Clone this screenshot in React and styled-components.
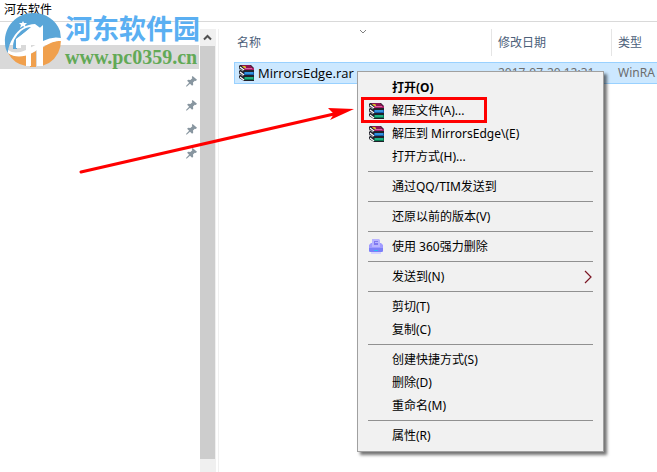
import styled, {createGlobalStyle} from "styled-components";

const GlobalStyle = createGlobalStyle`
  * {
    box-sizing: border-box;
  }

  body {
    margin: 0;
    background: #ffffff;
    color: #000000;
    font: 12px/16px "Noto Sans", "Noto Sans CJK SC", sans-serif;
  }

  svg {
    display: block;
    flex: none;
  }
`;

const Page = styled.div`
  position: relative;
  display: flex;
  flex-direction: column;
  min-height: 100vh;
  overflow: hidden;
`;

const TitleBar = styled.header`
  height: 22px;
  padding: 2px 4px;
  border-bottom: 1px solid #d9d9d9;
`;

const Body = styled.div`
  flex: 1;
  display: flex;
  padding-top: 7px;
`;

const Sidebar = styled.nav`
  flex: none;
  display: flex;
  width: 219px;
  border-right: 1px solid #f0f0f0;
`;

const QuickAccess = styled.ul`
  flex: 1;
  margin: 0;
  padding: 16px 1px 0 0;
  list-style: none;
`;

const QuickItem = styled.li`
  display: flex;
  align-items: center;
  justify-content: flex-end;
  height: 24px;
  padding-right: 2px;
  background: ${({$active}) => $active ? "#d9d9d9" : "transparent"};
`;

const ScrollTrack = styled.div`
  display: flex;
  flex-direction: column;
  width: 16px;
  margin-right: 2px;
  padding: 0 1px 13px 0;
  background: #f0f0f0;
`;

const ScrollButton = styled.button`
  display: flex;
  justify-content: center;
  align-items: center;
  height: 17px;
  padding: 0;
  border: none;
  background: transparent;
`;

const ScrollThumb = styled.div`
  flex: 1;
  background: #cdcdcd;
`;

const Files = styled.main`
  flex: 1;
  min-width: 0;
  padding-left: 15px;
`;

const FileTable = styled.table`
  width: 100%;
  table-layout: fixed;
  border-collapse: separate;
  border-spacing: 0;
`;

const HeadCell = styled.th`
  position: relative;
  width: ${({$width}) => $width || "auto"};
  height: 27px;
  padding: 0 0 0 ${({$indent}) => $indent || "6px"};
  border-right: ${({$last}) => $last ? "none" : "1px solid #e5e5e5"};
  color: #4c607a;
  font-weight: normal;
  text-align: left;
  white-space: nowrap;
`;

const SortMark = styled.span`
  position: absolute;
  top: 0;
  left: 50%;
  transform: translateX(-50%);
`;

const SpacerCell = styled.td`
  height: 6px;
  padding: 0;
`;

const Cell = styled.td`
  height: 22px;
  padding: 0 0 0 6px;
  border: solid #99d1ff;
  border-width: 1px 0;
  background: #cce8ff;
  color: #6d6d6d;
  white-space: nowrap;

  &:first-child {
    padding-left: 3px;
    border-left-width: 1px;
    color: #000000;
  }
`;

const FileName = styled.span`
  display: flex;
  align-items: center;
  gap: 4px;
  font-family: "Open Sans", sans-serif;
  font-size: 13px;
`;

const Menu = styled.div`
  position: absolute;
  top: 71px;
  left: 357px;
  width: 247px;
  padding: 4px 0;
  border: 1px solid #a0a0a0;
  background: #f1f1f1;
  box-shadow: 3px 3px 3px rgba(0, 0, 0, 0.55);
`;

const MenuItem = styled.button`
  display: flex;
  align-items: center;
  width: 100%;
  height: 23px;
  padding: 0 10px;
  border: none;
  background: transparent;
  color: #000000;
  font: inherit;
  font-weight: ${({$bold}) => $bold ? "bold" : "normal"};
  text-align: left;
  white-space: nowrap;

  &:hover {
    background: #ffffff;
  }
`;

const MenuIcon = styled.span`
  flex: none;
  width: 24px;
`;

const MenuLabel = styled.span`
  flex: 1;
`;

const Separator = styled.hr`
  height: 1px;
  margin: 3px 10px;
  border: none;
  background: #919191;
`;

const Highlight = styled.div`
  position: absolute;
  top: 97px;
  left: 361px;
  width: 126px;
  height: 26px;
  border: 3px solid #ff0000;
  pointer-events: none;
`;

const Arrow = styled.svg`
  position: absolute;
  top: 100px;
  left: 76px;
  pointer-events: none;
`;

const Watermark = styled.div`
  position: absolute;
  top: 12px;
  left: 4px;
  display: flex;
  gap: 2px;
  pointer-events: none;
`;

const WatermarkName = styled.div`
  color: #5aaff2;
  font: bold 27px/32px "Noto Sans CJK SC", sans-serif;
`;

const WatermarkSite = styled.div`
  color: #62a956;
  font: bold 20px/26px "Liberation Serif", serif;
`;

// three stacked books: page edges on the left, spines on the right
function RarIcon() {
  return <svg width="16" height="16" viewBox="0 0 16 16">
    <path d="M2 0H13L16 3V16H6L1 13V11L2 10L1 8V6L2 5L1 3V1Z" fill="#20202a"/>
    <path d="M3 0H12L15 3H6Z" fill="#8c1450"/>
    <path d="M6 3H16V5H6Z" fill="#a81f66"/>
    <path d="M7 3H14V4H7Z" fill="#d765a0"/>
    <path d="M6 7H16V10H6Z" fill="#155cab"/>
    <path d="M7 7H15V9H7Z" fill="#3193dc"/>
    <path d="M6 12H16V15H6Z" fill="#08774f"/>
    <path d="M7 12H15V14H7Z" fill="#20b184"/>
    <path d="M2 2L6 5M2 7L6 10M2 12L6 15" fill="none" stroke="#ffffff" strokeWidth="1.2"/>
    <path d="M2 4L5 6M2 9L5 11" fill="none" stroke="#a9a9b4"/>
    <path d="M4 1H7L8 2V3H6Z" fill="#d9b928"/>
  </svg>;
}

function ShredderIcon() {
  return <svg width="16" height="16" viewBox="0 0 16 16">
    <path d="M4 0H11L12 1V8H4Z" fill="#b9b4ff"/>
    <path d="M6 2H10V3H7V4H10V6H6Z" fill="#8078f0"/>
    <path d="M1 6L3 4H4V8H12V4H13L15 6V12L14 13H2L1 12Z" fill="#a19bff"/>
    <path d="M1 9H15V12L14 13H2L1 12Z" fill="#7c80f8"/>
    <path d="M6 11H10V12H6Z" fill="#2cbcf8"/>
    <path d="M3 13H13V15H3Z" fill="#d5d2ff"/>
  </svg>;
}

function PinIcon() {
  return <svg width="11" height="11" viewBox="0 0 11 11">
    <path d="M6.6 0L11 3.8L9.8 4.9L8.8 4.7L7 6.6L7.2 8.8L6.1 9.8L4 7.7L.6 10.7L0 10.1L3.1 6.8L1.1 4.8L2.2 3.8L4.4 4L6.3 2.2L5.8 1Z" fill="#8896a0"/>
  </svg>;
}

function SiteLogo() {
  return <svg width="59" height="57" viewBox="0 0 59 57">
    <path d="M1 31C0 14 13 1 29 1C42 1 52 8 56 19L57 27C51 26 45 28 39 31V18L31 12C23 12 14 17 9 26C6 31 4 35 4 41Q1 37 1 31Z" fill="#5aa6d8"/>
    <path d="M9 37Q8 27 17 19Q22 15 27 15L13 27V37Z" fill="#5aa6d8"/>
    <path d="M41 20Q46 14 52 16Q56 21 55 27Q48 26 41 30Z" fill="#5aa6d8"/>
    <path d="M4 41Q10 46 22 42V54Q10 52 4 41Z" fill="#f0a04d"/>
    <path d="M26 42L32 39V55H26Z" fill="#f0a04d"/>
    <path d="M38 36Q48 29 57 28Q57 43 45 51L38 54Z" fill="#f0a04d"/>
    <path d="M4 38Q11 43 22 38L39 29Q48 24 57 26V29Q48 28 38 35L28 41Q14 48 4 41Z" fill="#ffffff"/>
    <path d="M12 27L27 16V54H22V25L17 29V36H12Z" fill="#ffffff"/>
    <path d="M30 21L39 13V54H33V24L30 26Z" fill="#ffffff"/>
    <path d="M19 9L20 11L23 11L21 13L22 16L19 14L16 16L17 13L15 11L18 11Z" fill="#ffffff"/>
  </svg>;
}

function SubmenuMark() {
  return <svg width="9" height="14" viewBox="0 0 9 14">
    <path d="M1 1L7 7L1 13" fill="none" stroke="#7b1624" strokeWidth="1.2"/>
  </svg>;
}

const menuGroups = [
  [
    {label: "打开(O)", bold: true},
    {label: "解压文件(A)...", icon: <RarIcon/>},
    {label: "解压到 MirrorsEdge\\(E)", icon: <RarIcon/>},
    {label: "打开方式(H)..."},
  ],
  [{label: "通过QQ/TIM发送到"}],
  [{label: "还原以前的版本(V)"}],
  [{label: "使用 360强力删除", icon: <ShredderIcon/>}],
  [{label: "发送到(N)", submenu: true}],
  [{label: "剪切(T)"}, {label: "复制(C)"}],
  [{label: "创建快捷方式(S)"}, {label: "删除(D)"}, {label: "重命名(M)"}],
  [{label: "属性(R)"}],
];

function ContextMenu() {
  return <Menu role="menu">
    {menuGroups.map((group, index) => <div key={group[0].label}>
      {index > 0 && <Separator/>}
      {group.map(({label, bold, icon, submenu}) => <MenuItem key={label} type="button" role="menuitem" $bold={bold}>
        <MenuIcon>{icon}</MenuIcon>
        <MenuLabel>{label}</MenuLabel>
        {submenu && <SubmenuMark/>}
      </MenuItem>)}
    </div>)}
  </Menu>;
}

export default function App() {
  return <>
    <GlobalStyle/>
    <Page>
      <TitleBar>河东软件</TitleBar>
      <Body>
        <Sidebar>
          <QuickAccess>
            <QuickItem $active/>
            {[1, 2, 3, 4].map((item) => <QuickItem key={item}><PinIcon/></QuickItem>)}
          </QuickAccess>
          <ScrollTrack>
            <ScrollButton type="button" aria-label="向上滚动">
              <svg width="9" height="7" viewBox="0 0 9 7">
                <path d="M1 5.5L4.5 2L8 5.5" fill="none" stroke="#505050" strokeWidth="2"/>
              </svg>
            </ScrollButton>
            <ScrollThumb/>
          </ScrollTrack>
        </Sidebar>
        <Files>
          <FileTable>
            <thead>
              <tr>
                <HeadCell $width="258px" $indent="3px">
                  名称
                  <SortMark>
                    <svg width="7" height="5" viewBox="0 0 7 5">
                      <path d="M.5 1L3.5 4L6.5 1" fill="none" stroke="#808080"/>
                    </svg>
                  </SortMark>
                </HeadCell>
                <HeadCell $width="120px">修改日期</HeadCell>
                <HeadCell $last>类型</HeadCell>
              </tr>
            </thead>
            <tbody>
              <tr><SpacerCell colSpan={3}/></tr>
              <tr>
                <Cell><FileName><RarIcon/>MirrorsEdge.rar</FileName></Cell>
                <Cell>2017-07-20 12:31</Cell>
                <Cell>WinRA</Cell>
              </tr>
            </tbody>
          </FileTable>
        </Files>
      </Body>
      <ContextMenu/>
      <Highlight/>
      <Arrow width="280" height="76" viewBox="0 0 280 76">
        <path d="M5 72L258 14" fill="none" stroke="#ff0000" strokeWidth="3" strokeLinecap="round"/>
        <path d="M252 8L278 9L254 20L258 14Z" fill="#ff0000"/>
      </Arrow>
      <Watermark>
        <SiteLogo/>
        <div>
          <WatermarkName>河东软件园</WatermarkName>
          <WatermarkSite>www.pc0359.cn</WatermarkSite>
        </div>
      </Watermark>
    </Page>
  </>;
}
